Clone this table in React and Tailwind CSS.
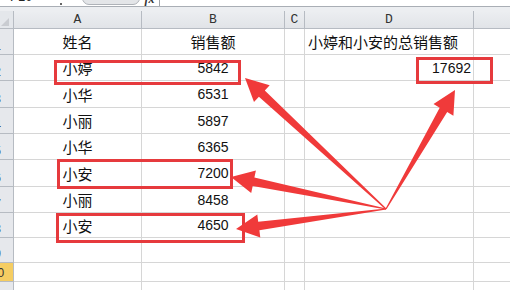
import React from "react";

const CJK = "font-['Noto_Sans_CJK_SC',sans-serif]";
const NUM = "font-['Liberation_Sans',sans-serif]";

const COLS = ["A", "B", "C", "D", "E"];

// sheet content, one entry per row (A, B, C, D)
const ROWS = [
  ["姓名", "销售额", "", "小婷和小安的总销售额"],
  ["小婷", "5842", "", "17692"],
  ["小华", "6531"],
  ["小丽", "5897"],
  ["小华", "6365"],
  ["小安", "7200"],
  ["小丽", "8458"],
  ["小安", "4650"],
  [],
  [],
  [],
];

const ACTIVE_ROW = 10;

// annotation boxes: x, y, w, h (stroke centre)
const BOXES = [
  [55.5, 61.5, 184, 22],
  [417.5, 58.5, 74, 24],
  [58.5, 160.5, 173, 27],
  [57.5, 214.5, 186, 27],
];

const ARROW_FROM = [386, 209];
const ARROW_TIPS = [
  [245, 78],
  [231, 177],
  [236, 229],
  [455, 90],
];

function arrowPoints([ox, oy], [tx, ty], head = 23, half = 11.5, shaft = 4.3) {
  const len = Math.hypot(tx - ox, ty - oy);
  const dx = (tx - ox) / len;
  const dy = (ty - oy) / len;
  const nx = -dy;
  const ny = dx;
  const bx = tx - dx * head;
  const by = ty - dy * head;
  const pts = [
    [ox + nx * 0.6, oy + ny * 0.6],
    [bx + nx * shaft, by + ny * shaft],
    [bx + nx * half, by + ny * half],
    [tx, ty],
    [bx - nx * half, by - ny * half],
    [bx - nx * shaft, by - ny * shaft],
    [ox - nx * 0.6, oy - ny * 0.6],
  ];
  return pts.map((p) => p.map((v) => v.toFixed(1)).join(",")).join(" ");
}

const FormulaBar = () => (
  <div className="flex h-[7px] items-end overflow-hidden border-b border-[#a9aeb5] bg-white">
    <span className="ml-[10px] mb-[3px] text-[13px] leading-[13px] text-[#222] font-['Liberation_Sans',sans-serif]">
      F10
    </span>
    <span className="ml-[28px] mb-[1px] h-[2px] w-[2px] bg-[#666]" />
    <div className="ml-[20px] mb-[1px] h-[14px] w-[58px] rounded-b-[7px] border border-[#aeb2b8] bg-[#e3e5e8]" />
    <span className="ml-[4px] mb-[1px] text-[12px] italic leading-[12px] font-bold text-[#333] font-['Liberation_Serif',serif]">
      fx
    </span>
    <div className="ml-[5px] h-full w-px bg-[#a0a4aa]" />
  </div>
);

const RowHeader = ({ n }) => {
  const active = n === ACTIVE_ROW;
  return (
    <div
      className={
        "relative overflow-hidden border-r border-b border-[#b6bbc2] " +
        (active ? "bg-[#f5cd62]" : "bg-[#e6e8ec]")
      }
    >
      <span className="absolute bottom-[1px] left-[-14.5px] w-[24px] text-center text-[12px] leading-[14px] text-[#333] font-['Liberation_Sans',sans-serif]">
        {n}
      </span>
    </div>
  );
};

const Cell = ({ col, row, value }) => {
  let align = "justify-center";
  if (col === 3) align = row === 0 ? "justify-start pl-[3px]" : "justify-end pr-[2px]";
  const isNum = value && /^\d+$/.test(value);
  return (
    <div
      className={`flex items-center whitespace-nowrap border-r border-b border-[#d6d6d6] text-[#111] ${align} ${
        isNum ? `${NUM} text-[14px]` : `${CJK} text-[15px]`
      } leading-none`}
    >
      {value}
    </div>
  );
};

const Sheet = () => (
  <div className="grid w-[574px] grid-cols-[14px_128px_143px_20px_169px_100px] grid-rows-[18px_26px_26px_27px_26px_26px_27px_26px_25px_25px_19px_30px]">
    {/* corner + column letters */}
    <div className="relative border-r border-b border-[#b6bbc2] bg-[#e4e7eb]">
      <div className="absolute bottom-[2px] right-[4px] h-0 w-0 border-b-[8px] border-l-[8px] border-b-[#c9ccd1] border-l-transparent" />
    </div>
    {COLS.map((c) => (
      <div
        key={c}
        className="flex items-center justify-center border-r border-b border-[#b6bbc2] bg-gradient-to-b from-[#eceef1] to-[#e1e4e8] text-[13px] text-[#333] font-['Liberation_Mono',monospace]"
      >
        {c}
      </div>
    ))}
    {ROWS.map((r, i) => (
      <React.Fragment key={i}>
        <RowHeader n={i + 1} />
        {[0, 1, 2, 3, 4].map((c) => (
          <Cell key={c} col={c} row={i} value={r[c]} />
        ))}
      </React.Fragment>
    ))}
  </div>
);

export default function App() {
  return (
    <div className="relative h-[290px] w-[510px] overflow-hidden bg-white">
      <FormulaBar />
      <div className="h-[4px] bg-[#eceef1]" />
      <Sheet />
      <svg
        className="pointer-events-none absolute inset-0"
        width="510"
        height="290"
        viewBox="0 0 510 290"
      >
        {BOXES.map(([x, y, w, h], i) => (
          <rect key={i} x={x} y={y} width={w} height={h} fill="none" stroke="#e63a3d" strokeWidth="3" />
        ))}
        {ARROW_TIPS.map((tip, i) => (
          <polygon key={i} points={arrowPoints(ARROW_FROM, tip)} fill="#f03a3a" />
        ))}
      </svg>
    </div>
  );
}
